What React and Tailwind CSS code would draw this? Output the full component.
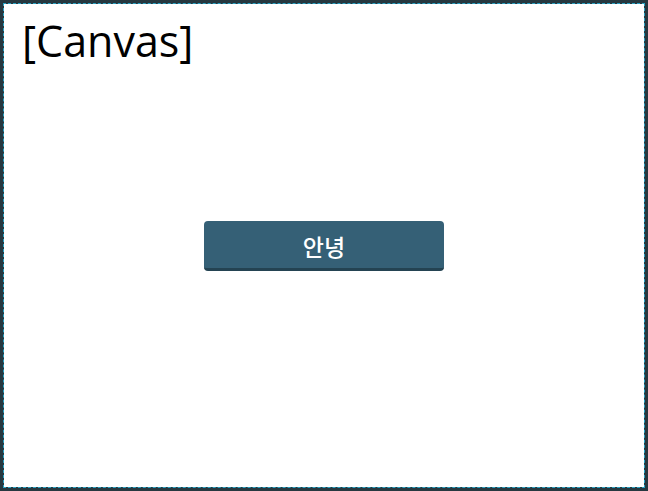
export default function App() {
  return (
    <div className="w-[648px] h-[491px] border-[3px] border-[#263840] bg-[#263840]">
      <div
        className="relative w-full h-full bg-white bg-clip-padding border border-dashed border-[#2aa3c4] flex items-center justify-center"
        style={{ fontFamily: '"Open Sans", "Noto Sans CJK KR", sans-serif' }}
      >
        <div className="absolute left-[18px] top-[7px] text-[43px] leading-[60px] font-[370] text-black">
          [Canvas]
        </div>
        <button
          className="w-[240px] h-[50px] pt-[4px] rounded-[4px] bg-[#356076] border-b-[3px] border-[#244352] text-white text-[23px] font-medium flex items-center justify-center"
          style={{ fontFamily: '"Noto Sans CJK KR", sans-serif' }}
        >
          안녕
        </button>
      </div>
    </div>
  );
}
